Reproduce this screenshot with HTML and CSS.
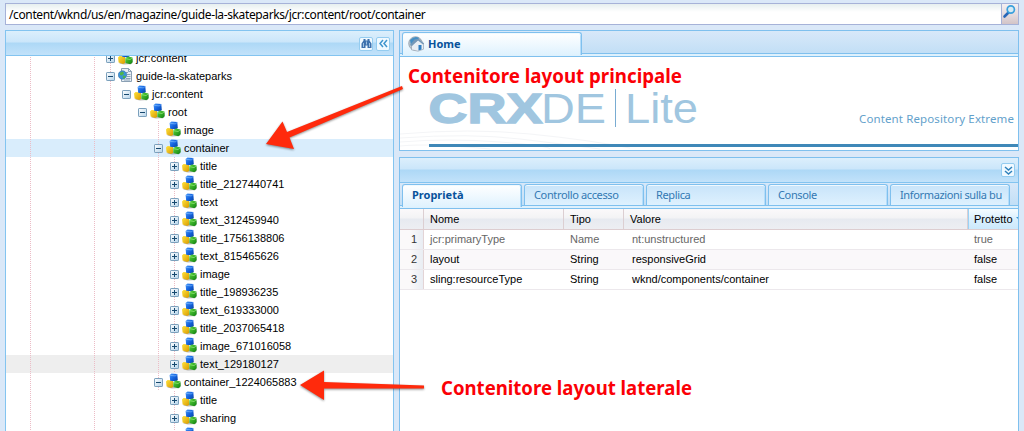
FILE: index.html
```
<!DOCTYPE html>
<html lang="it">
<head>
<meta charset="utf-8">
<title>CRXDE Lite</title>
<link rel="stylesheet" href="styles.css">
</head>
<body>
<svg class="defs" width="0" height="0">
  <defs>
    <linearGradient id="gb" x1="0" y1="0" x2="1" y2="1"><stop offset="0" stop-color="#4b9bfa"/><stop offset=".5" stop-color="#1464e0"/><stop offset="1" stop-color="#073f9e"/></linearGradient>
    <linearGradient id="gy" x1="0" y1="0" x2="1" y2="1"><stop offset="0" stop-color="#ffe23c"/><stop offset="1" stop-color="#d89a00"/></linearGradient>
    <linearGradient id="gg" x1="0" y1="0" x2="1" y2="1"><stop offset="0" stop-color="#5fdc3c"/><stop offset="1" stop-color="#0d7d10"/></linearGradient>
    <linearGradient id="gt" x1="0" y1="0" x2="1" y2="1"><stop offset="0" stop-color="#fff"/><stop offset="1" stop-color="#b4d3ea"/></linearGradient>
    <symbol id="cubes" viewBox="0 0 15 16">
      <path d="M1 14.500 6 15.500 14 15l.8-5-2-1z" fill="#555" opacity=".4"/>
      <path d="M0 8.500 1.500 7l5.500.4V14l-2 1L.6 13.600z" fill="url(#gy)"/>
      <path d="M3.600 2 5.500.4l5.800.6.5 6L9.800 8.600 4.200 7.800z" fill="url(#gb)"/>
      <path d="M7.200 9.400l2.600-2 4.600 1 .3 4.800-2.400 2.100L7.500 14z" fill="url(#gg)"/>
      <path d="M4 2.300 9.200 2.900l2-1.500" fill="none" stroke="#8cc4ff" stroke-width=".6"/>
      <path d="M7.500 9.600l4.500 1 2.300-1.800" fill="none" stroke="#a8f08c" stroke-width=".6"/>
    </symbol>
    <symbol id="page" viewBox="0 0 15 16">
      <path d="M3.500 1.500h7l3 3v10h-10z" fill="#e9eff5" stroke="#8ba0b4"/>
      <path d="M10.500 1.500v3h3M8 5.500h2M9 7.500h3.500M9 9.500h3.500M8 11.500h4.500M6 13h6" fill="none" stroke="#7f99b1" stroke-width=".9"/>
      <circle cx="4.500" cy="8" r="4.200" fill="#3c94d8" stroke="#2d6da8" stroke-width=".6"/>
      <path d="M2 5.500l3-1 1 2-2 2-2-.5zM5 8.500l3 .5-2 2.800-1.300-1z" fill="#51b548"/>
    </symbol>
    <symbol id="plus" viewBox="0 0 9 9"><rect x=".5" y=".5" width="8" height="8" rx=".6" fill="url(#gt)" stroke="#7ba0bc"/><path d="M2 4.500h5M4.500 2v5" stroke="#17496f"/></symbol>
    <symbol id="minus" viewBox="0 0 9 9"><rect x=".5" y=".5" width="8" height="8" rx=".6" fill="url(#gt)" stroke="#7ba0bc"/><path d="M2 4.500h5" stroke="#17496f"/></symbol>
  </defs>
</svg>

<div class="app">
  <div class="search">
    <div class="path"><span>/content/wknd/us/en/magazine/guide-la-skateparks/jcr:content/root/container</span></div>
    <div class="trigger"><svg width="15" height="15" viewBox="0 0 15 15"><path d="M7 8 2.500 12.500" stroke="#2867b8" stroke-width="2.600" stroke-linecap="round"/><circle cx="8.800" cy="5.500" r="3.600" fill="#d5ebf4" stroke="#3aa0dc" stroke-width="1.700"/></svg></div>
  </div>

  <div class="columns">
    <div class="tree-panel">
      <div class="bar tree-bar">
        <div class="tool"><svg width="13" height="13" viewBox="0 0 13 13"><path d="M3.500 2h2v1.500h2V2h2v1.500l2 3V11H7.500V8.500h-2V11h-4V6.500l2-3z" fill="#3d71ad"/><path d="M3.500 6v4M6.500 4.500v3M9.500 6v4" stroke="#b8d4ee" stroke-width=".8"/></svg></div>
        <div class="tool"><svg width="13" height="13" viewBox="0 0 13 13"><path d="M6 3 3 6.500 6 10M10 3 7 6.500 10 10" fill="none" stroke="#3f95cd" stroke-width="1.500"/></svg></div>
      </div>
      <div class="tree">
        <div class="row d6"><svg class="tg"><use href="#plus"/></svg><svg class="ic"><use href="#cubes"/></svg><span>jcr:content</span></div>
        <div class="row d6"><svg class="tg"><use href="#minus"/></svg><svg class="ic"><use href="#page"/></svg><span>guide-la-skateparks</span></div>
        <div class="row d7"><svg class="tg"><use href="#minus"/></svg><svg class="ic"><use href="#cubes"/></svg><span>jcr:content</span></div>
        <div class="row d8"><svg class="tg"><use href="#minus"/></svg><svg class="ic"><use href="#cubes"/></svg><span>root</span></div>
        <div class="row d9 leaf"><svg class="ic"><use href="#cubes"/></svg><span>image</span></div>
        <div class="row d9 selected"><svg class="tg"><use href="#minus"/></svg><svg class="ic"><use href="#cubes"/></svg><span>container</span></div>
        <div class="row d10 inner"><svg class="tg"><use href="#plus"/></svg><svg class="ic"><use href="#cubes"/></svg><span>title</span></div>
        <div class="row d10 inner"><svg class="tg"><use href="#plus"/></svg><svg class="ic"><use href="#cubes"/></svg><span>title_2127440741</span></div>
        <div class="row d10 inner"><svg class="tg"><use href="#plus"/></svg><svg class="ic"><use href="#cubes"/></svg><span>text</span></div>
        <div class="row d10 inner"><svg class="tg"><use href="#plus"/></svg><svg class="ic"><use href="#cubes"/></svg><span>text_312459940</span></div>
        <div class="row d10 inner"><svg class="tg"><use href="#plus"/></svg><svg class="ic"><use href="#cubes"/></svg><span>title_1756138806</span></div>
        <div class="row d10 inner"><svg class="tg"><use href="#plus"/></svg><svg class="ic"><use href="#cubes"/></svg><span>text_815465626</span></div>
        <div class="row d10 inner"><svg class="tg"><use href="#plus"/></svg><svg class="ic"><use href="#cubes"/></svg><span>image</span></div>
        <div class="row d10 inner"><svg class="tg"><use href="#plus"/></svg><svg class="ic"><use href="#cubes"/></svg><span>title_198936235</span></div>
        <div class="row d10 inner"><svg class="tg"><use href="#plus"/></svg><svg class="ic"><use href="#cubes"/></svg><span>text_619333000</span></div>
        <div class="row d10 inner"><svg class="tg"><use href="#plus"/></svg><svg class="ic"><use href="#cubes"/></svg><span>title_2037065418</span></div>
        <div class="row d10 inner"><svg class="tg"><use href="#plus"/></svg><svg class="ic"><use href="#cubes"/></svg><span>image_671016058</span></div>
        <div class="row d10 inner hover"><svg class="tg"><use href="#plus"/></svg><svg class="ic"><use href="#cubes"/></svg><span>text_129180127</span></div>
        <div class="row d9"><svg class="tg"><use href="#minus"/></svg><svg class="ic"><use href="#cubes"/></svg><span>container_1224065883</span></div>
        <div class="row d10"><svg class="tg"><use href="#plus"/></svg><svg class="ic"><use href="#cubes"/></svg><span>title</span></div>
        <div class="row d10"><svg class="tg"><use href="#plus"/></svg><svg class="ic"><use href="#cubes"/></svg><span>sharing</span></div>
        <div class="row d10"><svg class="tg"><use href="#plus"/></svg><svg class="ic"><use href="#cubes"/></svg></div>
      </div>
    </div>

    <div class="main">
      <div class="home-panel">
        <div class="tabs">
          <div class="tab active home-tab">
            <svg width="17" height="16" viewBox="0 0 17 16"><circle cx="7.500" cy="7.500" r="6.800" fill="#bdc9d2" stroke="#8794a0" stroke-width=".7"/><path d="M2 4Q7-1 11 2L8 7 3 10z" fill="#458fc5"/><path d="M3.500 8.500v5.300l6.500 1.400 5.500-2V7L11 3z" fill="#e8eef4" stroke="#8995a5" stroke-width=".6"/><path d="M2 9 6.500 3.500 10.500 2.800 16 7.500l-1 1L10 4.500 4 10z" fill="#7598b8"/><path d="M10.500 9h3v4.500l-3 1z" fill="#2e7dc2"/></svg>
            <span>Home</span>
          </div>
        </div>
        <div class="strip"></div>
        <div class="home-body">
          <svg width="618" height="93" viewBox="400 57 618 93">
            <g fill="none" stroke="#f4f5f7"><path d="M400 134q70-6 130 0t100 14M400 138q70-5 120 1t80 10M400 142q50-4 100 0t50 7M400 146q30-3 90 3"/></g>
            <g class="logo">
              <text x="428.500" y="122.500" font-size="42" font-weight="700" stroke="#a0c6e0" stroke-width="1.400" textLength="114" lengthAdjust="spacingAndGlyphs">CRX</text>
              <text x="541" y="122.500" font-size="42" textLength="65" lengthAdjust="spacingAndGlyphs">DE</text>
              <text x="625" y="122.500" font-size="42" textLength="73" lengthAdjust="spacingAndGlyphs">Lite</text>
            </g>
            <path d="M615.500 89v38" stroke="#79acd2"/>
            <text class="tagline" x="859" y="123" textLength="155">Content Repository Extreme</text>
            <path d="M429 145.500h589" stroke="#3f88b8" stroke-width="3"/>
          </svg>
        </div>
      </div>

      <div class="props-panel">
        <div class="bar props-bar">
          <div class="tool"><svg width="13" height="13" viewBox="0 0 13 13"><path d="M3 3l3.500 3L10 3M3 7l3.500 3L10 7" fill="none" stroke="#2f82bc" stroke-width="1.500"/></svg></div>
        </div>
        <div class="tabs props-tabs">
          <div class="tab active"><span>Proprietà</span></div>
          <div class="tab"><span>Controllo accesso</span></div>
          <div class="tab"><span>Replica</span></div>
          <div class="tab"><span>Console</span></div>
          <div class="tab"><span class="clip">Informazioni sulla bu</span></div>
        </div>
        <div class="strip"></div>
        <div class="grid">
          <div class="gr head"><div></div><div>Nome</div><div>Tipo</div><div>Valore</div><div class="sorted">Protetto<i></i></div></div>
          <div class="gr muted"><div>1</div><div>jcr:primaryType</div><div>Name</div><div>nt:unstructured</div><div>true</div></div>
          <div class="gr alt"><div>2</div><div>layout</div><div>String</div><div>responsiveGrid</div><div>false</div></div>
          <div class="gr"><div>3</div><div>sling:resourceType</div><div>String</div><div>wknd/components/container</div><div>false</div></div>
        </div>
      </div>
    </div>
  </div>

  <svg class="notes" width="1024" height="431" viewBox="0 0 1024 431">
    <g class="arrows">
      <path d="M266 144l16.500-22.500 4.500 10.500L402 86l1 3L289.500 137.500l4.500 11.500z"/>
      <path d="M300 385l24-14.500v11.500l100 3.500v3L324 388.500V400z"/>
    </g>
    <text x="408" y="83" textLength="274" lengthAdjust="spacingAndGlyphs">Contenitore layout principale</text>
    <text x="441" y="395" textLength="251" lengthAdjust="spacingAndGlyphs">Contenitore layout laterale</text>
  </svg>
</div>
</body>
</html>
```
FILE: styles.css
```
* { box-sizing: border-box; }
body {
  margin: 0;
  width: 1024px;
  height: 431px;
  overflow: hidden;
  background: #dae8f8;
  font: 11px "Liberation Sans", Arial, sans-serif;
  color: #000;
}
.defs { position: absolute; }
.app {
  position: relative;
  height: 431px;
  padding: 3px 5px 0;
  display: flex;
  flex-direction: column;
  gap: 5px;
  overflow: hidden;
}
.search { display: flex; height: 22px; flex: none; width: 1014px; border: 1px solid #a6b2d8; background: #fff; }
.path {
  flex: 1;
  padding-left: 3px;
  background: linear-gradient(#e6efef, #fff 8px);
  font: 12px/21px "Noto Sans", sans-serif;
  white-space: nowrap;
}
.path span { letter-spacing: -0.38px; }
.trigger { width: 17px; border-left: 1px solid #a6b2d8; background: linear-gradient(#f4f0f2, #e5dcdf 50%, #d3c4c7); display: flex; }
.columns { display: flex; gap: 5px; flex: none; height: 420px; width: 1014px; }
.tree-panel { width: 389px; border: 1px solid #83c4f0; background: #fff; }
.bar {
  display: flex;
  justify-content: flex-end;
  align-items: center;
  border-bottom: 1px solid #83c4f0;
  background: linear-gradient(#dceffc, #cbe6fa 46%, #add8f6 50%, #c2e2fa);
}
.tree-bar { height: 25px; padding: 1px 3px 0 0; gap: 3px; }
.tool {
  width: 14px;
  height: 14px;
  border: 1px solid #94ccf0;
  border-radius: 2px;
  background: #f0f9ff;
  display: flex;
  align-items: center;
  justify-content: center;
}
.tool svg { flex: none; }
.tree {
  height: 376px;
  overflow: hidden;
  --dots: linear-gradient(#ecbcc6 50%, transparent 50%);
}
.row {
  height: 18px;
  display: flex;
  align-items: center;
  white-space: nowrap;
  background-image: var(--dots), var(--dots), var(--dots), var(--dots);
  background-size: 1px 2px;
  background-repeat: repeat-y;
  background-position: 24px 0, 88px 0, 104px 0, 104px 0;
}
.row:first-child { margin-top: -7px; }
.leaf, .row.d9 { background-position: 24px 0, 88px 0, 104px 0, 152px 0; }
.inner {
  background-image: var(--dots), var(--dots), var(--dots), var(--dots), var(--dots);
  background-position: 24px 0, 88px 0, 104px 0, 152px 0, 168px 0;
}
.row.d10:not(.inner) { background-position: 24px 0, 88px 0, 104px 0, 168px 0; }
.d6 { padding-left: 100px; }
.d7 { padding-left: 116px; }
.d8 { padding-left: 132px; }
.d9 { padding-left: 148px; }
.d10 { padding-left: 164px; }
.leaf { padding-left: 160px; }
.selected { background-color: #d9edfc; }
.hover { background-color: #eee; }
.tg { width: 9px; height: 9px; margin: 5px 3px 0 0; align-self: flex-start; }
.ic { width: 15px; height: 16px; margin-right: 3px; align-self: flex-start; }
.main { width: 620px; display: flex; flex-direction: column; gap: 6px; }
.home-panel { height: 121px; border: 1px solid #7fc0ee; background: #fff; flex: none; overflow: hidden; }
.tabs {
  display: flex;
  gap: 2px;
  padding: 1px 0 0 2px;
  height: 23px;
  border-bottom: 1px solid #7fc0ee;
  background: linear-gradient(#d8e8f9, #c2dff6);
}
.strip { height: 3px; background: #def1fd; border-bottom: 1px solid #7fc0ee; }
.tab {
  width: 120px;
  flex: none;
  border: 1px solid #7fc0ee;
  border-bottom: 0;
  border-radius: 3px 3px 0 0;
  box-shadow: inset 0 1px #f0f9ff, inset -1px 0 #b5ddfa;
  padding-left: 9px;
  background: linear-gradient(#c8e4fa, #def1fe);
  color: #3379b3;
  font: 11px/20px "Noto Sans", sans-serif;
  letter-spacing: -0.36px;
  white-space: nowrap;
  overflow: hidden;
}
.tab.active { background: linear-gradient(#fff, #dff2fe); font-weight: 700; color: #08529b; height: 23px; letter-spacing: 0; }
.home-tab { width: 180px; display: flex; align-items: center; padding-left: 5px; gap: 3px; }
.home-body { height: 93px; }
.home-body svg { display: block; }
.logo { fill: #a0c6e0; font-family: "Liberation Sans", sans-serif; }
.tagline { fill: #63a1cb; font: 11.5px "Noto Sans", sans-serif; }
.props-panel { flex: 1; border: 1px solid #7fc0ee; background: #fff; }
.props-bar { height: 25px; padding-right: 3px; }
.props-tabs { height: 23px; }
.gr {
  display: grid;
  grid-template-columns: 24px 140px 60px 344px 50px;
  height: 20px;
  line-height: 19px;
  border-bottom: 1px solid #ece8ec;
  white-space: nowrap;
}
.gr > div { padding-left: 6px; overflow: hidden; }
.gr > div:nth-child(4) { padding-left: 8px; }
.gr > div:first-child { border-right: 1px solid #e3d4d6; padding: 0 6px 0 0; text-align: right; background: linear-gradient(90deg, #fbf9fa 40%, #e9edf3); color: #333; }
.head {
  height: 21px;
  line-height: 21px;
  border-bottom-color: #ddcdd0;
  background: linear-gradient(#fbf9fa, #f3f3f5 45%, #e7eaf0 50%, #edeef2);
}
.head > div:first-child { background: none !important; }
.head > div:nth-child(-n+3) { border-right: 1px solid #dccfd2; }
.head > div:nth-child(4) { padding-left: 6px; border-right: 1px solid #dccfd2; }
.head .sorted { background: linear-gradient(#f6fcff, #daf0fe 50%, #cce9fc); padding-left: 5px; border-left: 1px solid #9bd2f5; display: flex; align-items: center; gap: 3px; }
.sorted i { width: 0; border: 2px solid transparent; border-top-color: #3f95cd; flex: none; }
.muted { color: #666; }
.alt { background: #faf8fa; }
.notes { position: absolute; left: 0; top: 0; }
.notes text { font: 700 19px "Noto Sans", "Open Sans", sans-serif; fill: #fb0006; }
.arrows { fill: #ff2a0c; filter: drop-shadow(0 1px 1px rgba(0, 0, 0, .45)); }
```
